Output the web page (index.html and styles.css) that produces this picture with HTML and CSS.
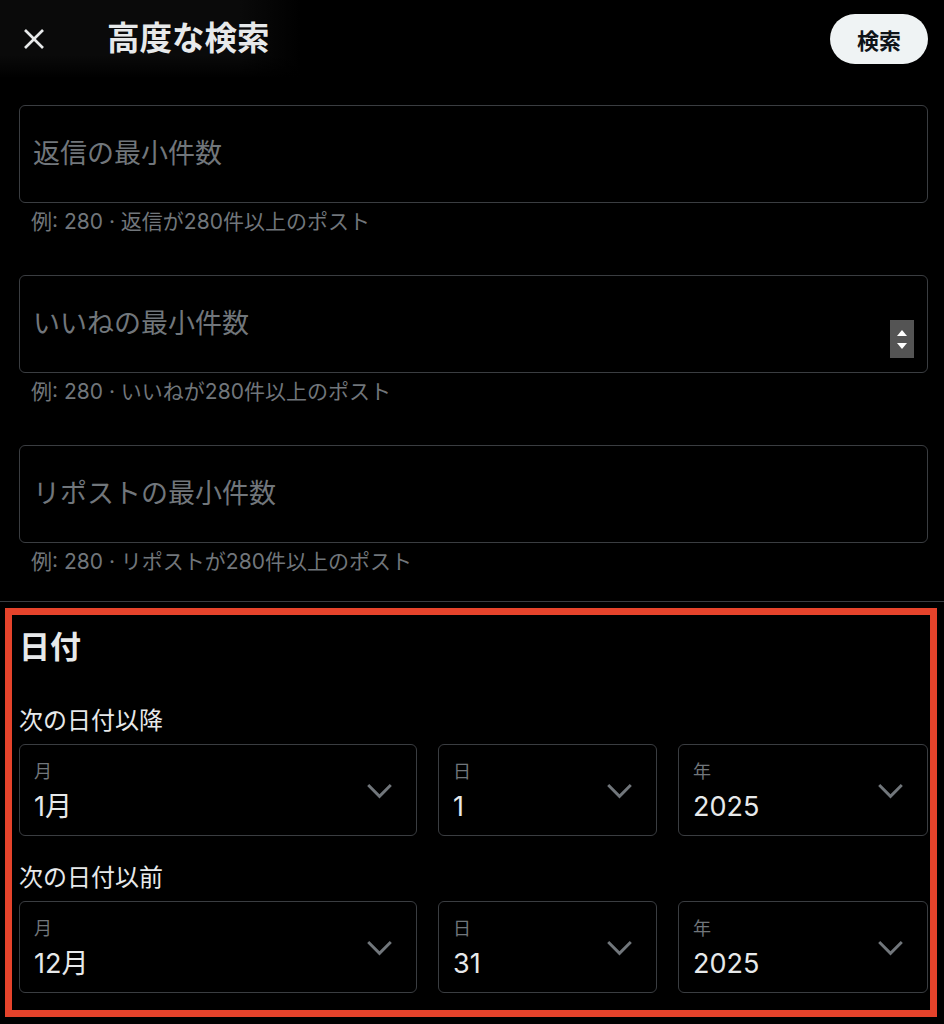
FILE: index.html
```html
<!DOCTYPE html>
<html lang="ja">
<head>
<meta charset="utf-8">
<title>高度な検索</title>
<link rel="stylesheet" href="styles.css">
</head>
<body>
<header class="topbar">
  <button class="close" aria-label="閉じる">
    <svg viewBox="0 0 24 24" width="32" height="32"><path fill="#e7e9ea" d="M10.59 12L4.54 5.96l1.42-1.42L12 10.59l6.04-6.05 1.42 1.42L13.41 12l6.05 6.04-1.42 1.42L12 13.41l-6.04 6.05-1.42-1.42L10.59 12z"/></svg>
  </button>
  <h1 class="title">高度な検索</h1>
  <button class="search-btn">検索</button>
</header>

<main class="fields">
  <div class="field">
    <div class="input"><span class="placeholder">返信の最小件数</span></div>
    <p class="hint">例: 280 · 返信が280件以上のポスト</p>
  </div>
  <div class="field">
    <div class="input">
      <span class="placeholder">いいねの最小件数</span>
      <span class="spinner"><i class="up"></i><i class="down"></i></span>
    </div>
    <p class="hint">例: 280 · いいねが280件以上のポスト</p>
  </div>
  <div class="field">
    <div class="input"><span class="placeholder">リポストの最小件数</span></div>
    <p class="hint">例: 280 · リポストが280件以上のポスト</p>
  </div>
</main>

<hr class="divider">

<section class="dates">
  <h2 class="dates-title">日付</h2>

  <h3 class="range-label">次の日付以降</h3>
  <div class="date-row">
    <div class="select">
      <div class="select-text"><span class="select-label">月</span><span class="select-value">1月</span></div>
      <svg class="chev" viewBox="0 0 24 24"><path d="M3.543 8.96l1.414-1.42L12 14.59l7.043-7.05 1.414 1.42L12 17.41 3.543 8.96z"/></svg>
    </div>
    <div class="select">
      <div class="select-text"><span class="select-label">日</span><span class="select-value">1</span></div>
      <svg class="chev" viewBox="0 0 24 24"><path d="M3.543 8.96l1.414-1.42L12 14.59l7.043-7.05 1.414 1.42L12 17.41 3.543 8.96z"/></svg>
    </div>
    <div class="select">
      <div class="select-text"><span class="select-label">年</span><span class="select-value">2025</span></div>
      <svg class="chev" viewBox="0 0 24 24"><path d="M3.543 8.96l1.414-1.42L12 14.59l7.043-7.05 1.414 1.42L12 17.41 3.543 8.96z"/></svg>
    </div>
  </div>

  <h3 class="range-label second">次の日付以前</h3>
  <div class="date-row">
    <div class="select">
      <div class="select-text"><span class="select-label">月</span><span class="select-value">12月</span></div>
      <svg class="chev" viewBox="0 0 24 24"><path d="M3.543 8.96l1.414-1.42L12 14.59l7.043-7.05 1.414 1.42L12 17.41 3.543 8.96z"/></svg>
    </div>
    <div class="select">
      <div class="select-text"><span class="select-label">日</span><span class="select-value">31</span></div>
      <svg class="chev" viewBox="0 0 24 24"><path d="M3.543 8.96l1.414-1.42L12 14.59l7.043-7.05 1.414 1.42L12 17.41 3.543 8.96z"/></svg>
    </div>
    <div class="select">
      <div class="select-text"><span class="select-label">年</span><span class="select-value">2025</span></div>
      <svg class="chev" viewBox="0 0 24 24"><path d="M3.543 8.96l1.414-1.42L12 14.59l7.043-7.05 1.414 1.42L12 17.41 3.543 8.96z"/></svg>
    </div>
  </div>
</section>
</body>
</html>
```

FILE: styles.css
```css
* { box-sizing: border-box; }

html, body {
  margin: 0;
  background: #000;
}

body {
  width: 944px;
  height: 1024px;
  overflow: hidden;
  color: #e7e9ea;
  font-family: Inter, "Noto Sans CJK JP", sans-serif;
}

.topbar {
  display: flex;
  align-items: center;
  height: 78px;
  padding: 0 16px 0 18px;
  background:
    linear-gradient(180deg, rgba(0,0,0,0) 70%, #000 100%),
    linear-gradient(90deg, #0a0a0a 0, #0a0a0a 240px, #000 300px);
}

.close {
  display: flex;
  padding: 0;
  border: 0;
  background: none;
  cursor: pointer;
}

.title {
  margin: 0 0 0 57px;
  font-size: 32.5px;
  font-weight: 700;
  line-height: 40px;
  color: #e7e9ea;
}

.search-btn {
  margin-left: auto;
  width: 98px;
  height: 50px;
  border: 0;
  border-radius: 25px;
  background: #eff3f4;
  color: #0f1419;
  font-family: inherit;
  font-size: 22px;
  font-weight: 700;
}

/* ---- numeric fields ---- */
.fields {
  padding: 27px 16px 0 19px;
}

.field + .field { margin-top: 40px; }

.input {
  display: flex;
  align-items: center;
  height: 98px;
  padding: 0 13px 5px 13px;
  border: 1px solid #3a3d41;
  border-radius: 6px;
}

.placeholder {
  font-size: 27px;
  color: #71767b;
}

.spinner {
  display: flex;
  flex-direction: column;
  align-items: center;
  justify-content: center;
  gap: 7px;
  align-self: flex-end;
  width: 24px;
  height: 38px;
  margin: 0 0 9px auto;
  background: #545454;
}

.spinner i {
  width: 0;
  height: 0;
  border-left: 5px solid transparent;
  border-right: 5px solid transparent;
}
.spinner .up { border-bottom: 6px solid #fff; }
.spinner .down { border-top: 6px solid #fff; }

.hint {
  margin: 6px 0 0 12px;
  font-size: 21px;
  line-height: 26px;
  color: #71767b;
}

.divider {
  margin: 26px 0 0;
  border: 0;
  border-top: 1px solid #3a3d41;
}

/* ---- date range ---- */
.dates {
  margin: 6px 7px 0 5px;
  padding: 12px 2px 17px 7px;
  border: 7px solid #e5432b;
}

.dates-title {
  margin: 0;
  font-size: 31px;
  font-weight: 700;
  line-height: 40px;
}

.range-label {
  margin: 39px 0 8px;
  font-size: 24px;
  font-weight: 400;
  line-height: 30px;
}
.range-label.second { margin-top: 27px; }

.date-row {
  display: grid;
  grid-template-columns: 398fr 219fr 250fr;
  gap: 21px;
}

.select {
  display: flex;
  align-items: center;
  height: 92px;
  padding: 0 19px 0 14px;
  border: 1px solid #3a3d41;
  border-radius: 6px;
}

.select-text {
  display: flex;
  flex-direction: column;
  padding-top: 3px;
}

.select-label {
  font-size: 18px;
  line-height: 22px;
  color: #71767b;
  margin-bottom: 8px;
}

.select-value {
  font-size: 27px;
  line-height: 32px;
  color: #e7e9ea;
}

.chev {
  width: 35px;
  height: 35px;
  margin-left: auto;
  fill: #71767b;
}
```
